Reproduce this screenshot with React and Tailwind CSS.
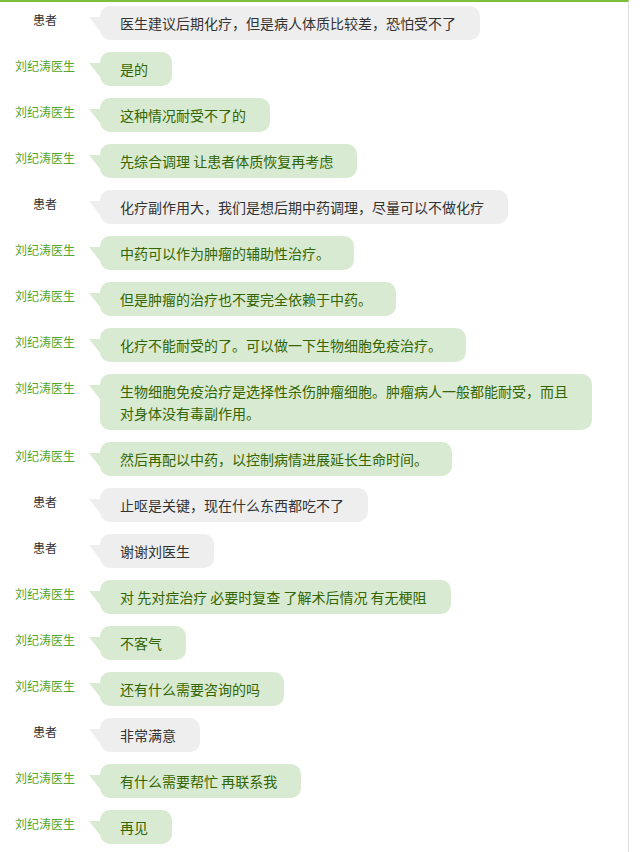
const messages = [
  { from: 'p', text: '医生建议后期化疗，但是病人体质比较差，恐怕受不了' },
  { from: 'd', text: '是的' },
  { from: 'd', text: '这种情况耐受不了的' },
  { from: 'd', text: '先综合调理 让患者体质恢复再考虑' },
  { from: 'p', text: '化疗副作用大，我们是想后期中药调理，尽量可以不做化疗' },
  { from: 'd', text: '中药可以作为肿瘤的辅助性治疗。' },
  { from: 'd', text: '但是肿瘤的治疗也不要完全依赖于中药。' },
  { from: 'd', text: '化疗不能耐受的了。可以做一下生物细胞免疫治疗。' },
  { from: 'd', text: '生物细胞免疫治疗是选择性杀伤肿瘤细胞。肿瘤病人一般都能耐受，而且对身体没有毒副作用。' },
  { from: 'd', text: '然后再配以中药，以控制病情进展延长生命时间。' },
  { from: 'p', text: '止呕是关键，现在什么东西都吃不了' },
  { from: 'p', text: '谢谢刘医生' },
  { from: 'd', text: '对 先对症治疗 必要时复查 了解术后情况 有无梗阻' },
  { from: 'd', text: '不客气' },
  { from: 'd', text: '还有什么需要咨询的吗' },
  { from: 'p', text: '非常满意' },
  { from: 'd', text: '有什么需要帮忙 再联系我' },
  { from: 'd', text: '再见' },
]

function Row({ from, text }) {
  const doctor = from === 'd'
  return (
    <div className="flex items-start">
      <div
        className={`w-[90px] shrink-0 mt-[5px] text-center text-[12px] leading-[18px] ${
          doctor ? 'text-[#55a62a]' : 'text-[#333333]'
        }`}
      >
        {doctor ? '刘纪涛医生' : '患者'}
      </div>
      <div className="relative ml-[10px]">
        {/* tail */}
        <span
          className={`absolute left-[-11px] top-[11px] h-0 w-0 border-l-[11px] border-l-transparent border-t-[14px] ${
            doctor ? 'border-t-[#d9ead2]' : 'border-t-[#eeeeee]'
          }`}
        />
        <div
          className={`max-w-[492px] rounded-[10px] pl-[20px] pr-[24px] py-[6px] text-[14px] leading-[22px] ${
            doctor ? 'bg-[#d9ead2] text-[#336600]' : 'bg-[#eeeeee] text-[#333333]'
          }`}
        >
          {text}
        </div>
      </div>
    </div>
  )
}

export default function App() {
  return (
    <div
      className="w-[629px] min-h-[852px] border-t-2 border-t-[#7bbf3b] border-r border-r-[#dddddd] bg-white pt-[4px] pb-[8px]"
      style={{ fontFamily: '"Microsoft YaHei", "Noto Sans CJK SC", "Noto Sans", sans-serif' }}
    >
      <div className="flex flex-col gap-[12px]">
        {messages.map((m, i) => (
          <Row key={i} {...m} />
        ))}
      </div>
    </div>
  )
}
